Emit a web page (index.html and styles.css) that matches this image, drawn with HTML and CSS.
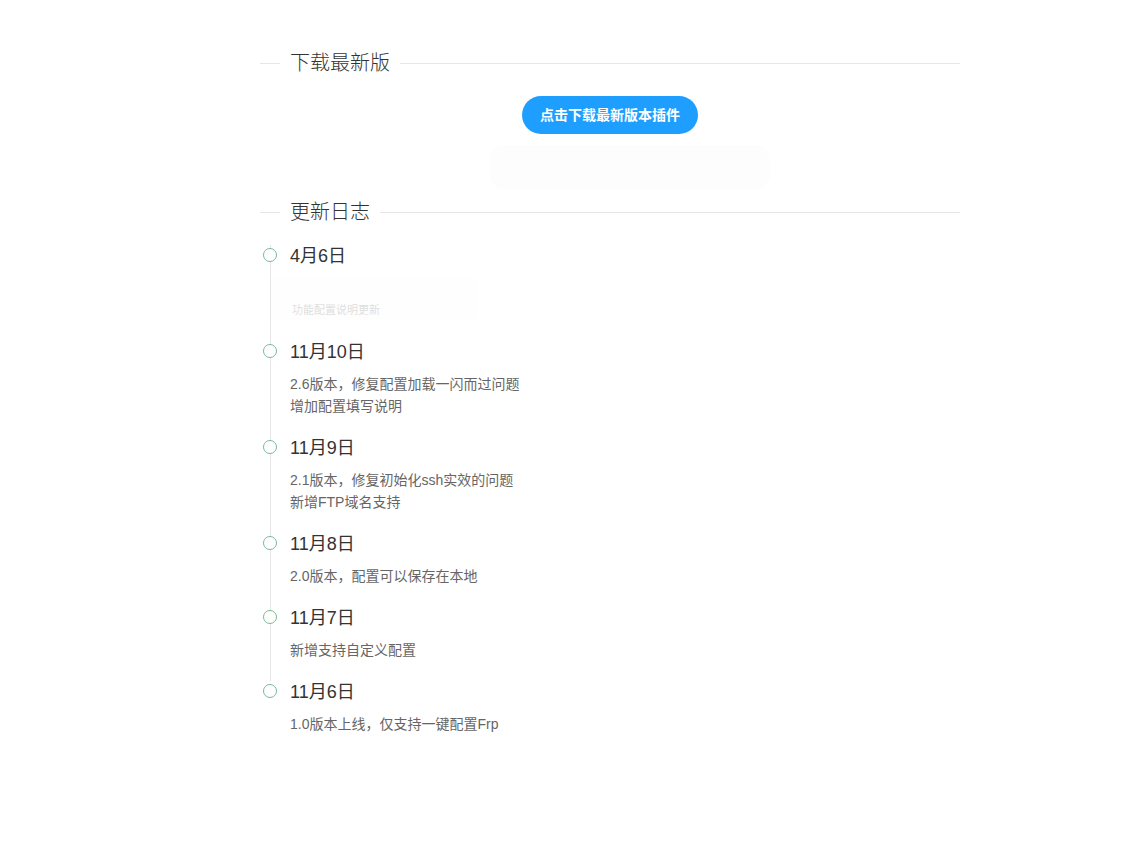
FILE: index.html
```html
<!DOCTYPE html>
<html lang="zh-CN">
<head>
<meta charset="utf-8">
<title>下载最新版</title>
<link rel="stylesheet" href="styles.css">
</head>
<body>
<div class="page">
  <fieldset class="field-title">
    <legend>下载最新版</legend>
  </fieldset>
  <div class="download">
    <a class="btn" href="#">点击下载最新版本插件</a>
    <div class="ghost"></div>
  </div>

  <fieldset class="field-title">
    <legend>更新日志</legend>
  </fieldset>

  <ul class="timeline">
    <li class="tl-item">
      <i class="tl-axis"></i>
      <div class="tl-content">
        <h3 class="tl-title">4月6日</h3>
        <div class="tl-faint"><span>功能配置说明更新</span></div>
      </div>
    </li>
    <li class="tl-item">
      <i class="tl-axis"></i>
      <div class="tl-content">
        <h3 class="tl-title">11月10日</h3>
        <p>2.6版本，修复配置加载一闪而过问题</p>
        <p>增加配置填写说明</p>
      </div>
    </li>
    <li class="tl-item">
      <i class="tl-axis"></i>
      <div class="tl-content">
        <h3 class="tl-title">11月9日</h3>
        <p>2.1版本，修复初始化ssh实效的问题</p>
        <p>新增FTP域名支持</p>
      </div>
    </li>
    <li class="tl-item">
      <i class="tl-axis"></i>
      <div class="tl-content">
        <h3 class="tl-title">11月8日</h3>
        <p>2.0版本，配置可以保存在本地</p>
      </div>
    </li>
    <li class="tl-item">
      <i class="tl-axis"></i>
      <div class="tl-content">
        <h3 class="tl-title">11月7日</h3>
        <p>新增支持自定义配置</p>
      </div>
    </li>
    <li class="tl-item tl-last">
      <i class="tl-axis"></i>
      <div class="tl-content">
        <h3 class="tl-title">11月6日</h3>
        <p>1.0版本上线，仅支持一键配置Frp</p>
      </div>
    </li>
  </ul>
</div>
</body>
</html>
```
FILE: styles.css
```css
html, body {
  margin: 0;
  padding: 0;
  background: #fff;
}
body {
  font-family: "Liberation Sans", "Noto Sans CJK SC", sans-serif;
  color: #333;
  font-size: 14px;
}
.page {
  width: 700px;
  margin-left: 260px;
  padding-top: 49px;
}
.field-title {
  margin: 0;
  padding: 0;
  border: none;
  border-top: 1px solid #e6e6e6;
  min-width: 0;
}
.field-title legend {
  margin-left: 20px;
  padding: 0 10px;
  font-size: 20px;
  line-height: 28px;
  font-weight: 300;
  color: #333;
}
.download {
  padding-top: 19px;
  height: 102px;
  text-align: center;
}
.btn {
  display: inline-block;
  height: 38px;
  line-height: 38px;
  padding: 0 18px;
  border-radius: 19px;
  background: #1E9FFF;
  color: #fff;
  font-size: 14px;
  font-weight: bold;
  text-decoration: none;
}
.ghost {
  width: 280px;
  height: 44px;
  margin: 11px 0 0 230px;
  border-radius: 14px;
  background: #fdfdfd;
}
.timeline {
  list-style: none;
  margin: 19px 0 0 5px;
  padding: 0;
}
.tl-item {
  position: relative;
  padding-bottom: 20px;
}
.tl-item::before {
  content: "";
  position: absolute;
  left: 5px;
  top: 0;
  width: 1px;
  height: 100%;
  background: #e6e6e6;
}
.tl-last::before {
  display: none;
}
.tl-axis {
  position: absolute;
  left: -2.5px;
  top: 2.5px;
  width: 12px;
  height: 12px;
  border: 1.5px solid #78b996;
  border-radius: 50%;
  background: #fff;
  z-index: 2;
}
.tl-content {
  padding-left: 25px;
}
.tl-title {
  margin: 0 0 10px;
  font-size: 18px;
  line-height: 22px;
  font-weight: normal;
  color: #333;
}
.tl-content p {
  margin: 0;
  line-height: 22px;
  font-size: 14px;
  color: #666;
}
.tl-faint {
  height: 44px;
  box-sizing: border-box;
  padding-top: 24px;
  margin-left: -20px;
  padding-left: 22px;
  width: 208px;
  border-radius: 8px;
  background: #fefefe;
}
.tl-faint span {
  font-size: 11px;
  line-height: 16px;
  color: #dedede;
}
```
